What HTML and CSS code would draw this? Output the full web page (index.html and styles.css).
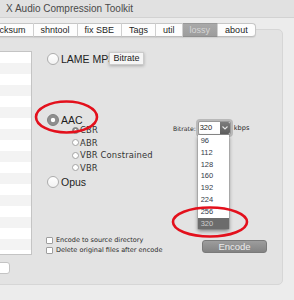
FILE: index.html
```html
<!DOCTYPE html>
<html lang="en">
<head>
    <meta charset="UTF-8">
    <meta name="viewport" content="width=device-width, initial-scale=1.0">
    <title>X Audio Compression Toolkit</title>
    <link rel="stylesheet" href="styles.css">
</head>
<body>
    <div class="titlebar">
        <span class="title">X Audio Compression Toolkit</span>
    </div>

    <div class="window">
        <div class="tabs">
            <span class="tab first">checksum</span>
            <span class="tab">shntool</span>
            <span class="tab">fix SBE</span>
            <span class="tab">Tags</span>
            <span class="tab">util</span>
            <span class="tab active">lossy</span>
            <span class="tab last">about</span>
        </div>

        <div class="panel">
            <div class="files">
                <div class="file-list"></div>
                <div class="file-field"></div>
            </div>

            <div class="options">
                <div class="radio-row lame">
                    <span class="radio"></span>
                    <span class="radio-label">LAME MP3</span>
                    <span class="tooltip">Bitrate</span>
                </div>

                <div class="aac-block">
                    <div class="aac-opts">
                        <div class="radio-row">
                            <span class="radio on"></span>
                            <span class="radio-label">AAC</span>
                        </div>
                        <div class="sub-radios">
                            <div class="sub-row"><span class="mini-radio on"></span>CBR</div>
                            <div class="sub-row"><span class="mini-radio"></span>ABR</div>
                            <div class="sub-row"><span class="mini-radio"></span>VBR Constrained</div>
                            <div class="sub-row"><span class="mini-radio"></span>VBR</div>
                        </div>
                    </div>

                    <div class="bitrate">
                        <span class="small-label">Bitrate:</span>
                        <div class="select">
                            <div class="select-inner">
                                <span class="select-value">320</span>
                                <span class="select-arrow">
                                    <svg width="6" height="4" viewBox="0 0 6 4"><path d="M0.5 0.5 L3 3 L5.5 0.5" fill="none" stroke="#e6e6e6" stroke-width="1.1"/></svg>
                                </span>
                            </div>
                            <ul class="dropdown">
                                <li>96</li>
                                <li>112</li>
                                <li>128</li>
                                <li>160</li>
                                <li>192</li>
                                <li>224</li>
                                <li>256</li>
                                <li class="selected">320</li>
                            </ul>
                        </div>
                        <span class="small-label kbps">kbps</span>
                    </div>
                </div>

                <div class="radio-row opus">
                    <span class="radio"></span>
                    <span class="radio-label">Opus</span>
                </div>

                <div class="bottom-row">
                    <div class="checks">
                        <div class="check"><span class="box"></span>Encode to source directory</div>
                        <div class="check"><span class="box"></span>Delete original files after encode</div>
                    </div>
                    <button class="encode">Encode</button>
                </div>
            </div>
        </div>
    </div>

    <!-- red circles drawn over the screenshot -->
    <svg class="marks" width="294" height="300" viewBox="0 0 294 300">
        <ellipse cx="66.5" cy="117" rx="30.5" ry="15.5" fill="none" stroke="#e3101c" stroke-width="2.6"/>
        <ellipse cx="210" cy="222" rx="37" ry="14.5" fill="none" stroke="#e3101c" stroke-width="2.6"/>
    </svg>
</body>
</html>
```

FILE: styles.css
```css
body {
    margin: 0;
    padding: 0;
    width: 294px;
    height: 300px;
    overflow: hidden;
    position: relative;
    background-color: #ececec;
    font-family: "Liberation Sans", Arial, sans-serif;
    color: #1e1e1e;
}

.titlebar {
    height: 17px;
    background-color: #e1e1e1;
    border-bottom: 1px solid #d2d2d2;
    display: flex;
    align-items: center;
    padding-left: 6px;
}
.title {
    font-size: 10px;
    color: #4a4a4a;
}

.window {
    padding-top: 5px;
}

.tabs {
    position: relative;
    z-index: 1;
    display: flex;
    margin-left: -23px;
    height: 14px;
}
.tab {
    box-sizing: border-box;
    height: 14px;
    padding: 0 7px;
    font-size: 9px;
    line-height: 12px;
    background-color: #fdfdfd;
    border-top: 1px solid #c6c6c6;
    border-bottom: 1px solid #bdbdbd;
    border-right: 1px solid #d2d2d2;
    box-shadow: 0 1px 1px rgba(0, 0, 0, 0.08);
}
.tab.first {
    border-left: 1px solid #c6c6c6;
    border-radius: 4px 0 0 4px;
}
.tab.last {
    border-right: 1px solid #c6c6c6;
    border-radius: 0 4px 4px 0;
}
.tab.active {
    background: linear-gradient(#a9a9a9, #9d9d9d);
    color: #d6d6d6;
    border-top-color: #999;
    border-bottom-color: #8f8f8f;
}

.panel {
    box-sizing: border-box;
    display: flex;
    height: 256px;
    margin: -8px 11px 0 -30px;
    background-color: #e3e3e3;
    border: 1px solid #d6d6d6;
    border-radius: 5px;
}

.files {
    width: 61px;
    padding-top: 21px;
}
.file-list {
    box-sizing: border-box;
    height: 204px;
    border: 1px solid #c4c4c4;
    background: repeating-linear-gradient(#ffffff 0, #ffffff 11px, #f3f3f3 11px, #f3f3f3 22px);
}
.file-field {
    box-sizing: border-box;
    width: 39px;
    height: 12px;
    margin-top: 7px;
    background-color: #fff;
    border: 1px solid #c4c4c4;
    border-radius: 3px;
}

.options {
    flex: 1;
    padding-left: 15px;
    padding-top: 23px;
}

.radio-row {
    display: flex;
    align-items: center;
    height: 12px;
    font-size: 10.5px;
}
.radio-row.lame {
    position: relative;
}
.radio {
    box-sizing: border-box;
    width: 12px;
    height: 12px;
    border-radius: 50%;
    border: 1px solid #adadad;
    background: linear-gradient(#ffffff, #f2f2f2);
}
.radio.on {
    border-color: #7e7e7e;
    background: radial-gradient(circle, #ffffff 0, #ffffff 1.8px, #8c8c8c 2.6px, #959595 100%);
}
.radio-label {
    margin-left: 2px;
}

.tooltip {
    position: absolute;
    left: 62px;
    top: -1px;
    box-sizing: border-box;
    width: 35px;
    height: 13px;
    background-color: #f5f5f5;
    border: 1px solid #cbcbcb;
    box-shadow: 0 1px 3px rgba(0, 0, 0, 0.25);
    font-size: 9px;
    line-height: 11px;
    text-align: center;
    color: #222;
}

.aac-block {
    display: flex;
    align-items: flex-start;
    margin-top: 49px;
}
.aac-opts {
    width: 126px;
}
.sub-radios {
    margin-top: -2px;
}
.sub-row {
    display: flex;
    align-items: center;
    height: 12.5px;
    padding-left: 25px;
    font-family: "DejaVu Sans", sans-serif;
    font-size: 8.4px;
    letter-spacing: 0.15px;
    color: #333;
}
.mini-radio {
    box-sizing: border-box;
    width: 7px;
    height: 7px;
    margin-right: 1px;
    border-radius: 50%;
    border: 1px solid #a3a3a3;
    background-color: #fff;
}
.mini-radio.on {
    border-color: #7e7e7e;
    background: radial-gradient(circle, #ffffff 0, #ffffff 1px, #8c8c8c 1.6px);
}

.bitrate {
    display: flex;
    align-items: center;
    margin-top: 5px;
}
.small-label {
    flex: none;
    font-family: "DejaVu Sans", sans-serif;
    font-size: 6.1px;
    color: #2a2a2a;
}
.small-label.kbps {
    margin-left: 1px;
    font-size: 6.6px;
}
.select {
    position: relative;
    flex: none;
    box-sizing: border-box;
    width: 37px;
    height: 18px;
    margin-left: 0;
    padding: 2px;
    border-radius: 4px;
    background-color: #b9b9b9;
}
.select-inner {
    box-sizing: border-box;
    display: flex;
    height: 14px;
    background-color: #fff;
    border: 1px solid #9a9a9a;
    border-radius: 2px;
}
.select-value {
    flex: 1;
    padding-left: 1px;
    font-size: 7.5px;
    line-height: 12px;
    color: #222;
}
.select-arrow {
    width: 10px;
    display: flex;
    align-items: center;
    justify-content: center;
    background: linear-gradient(#7c7c7c, #5e5e5e);
    border-radius: 0 2px 2px 0;
}

.dropdown {
    position: absolute;
    top: 16px;
    left: 2px;
    width: 31px;
    margin: 0;
    padding: 0;
    list-style: none;
    background-color: #fff;
    box-shadow: 0 2px 4px rgba(0, 0, 0, 0.45), 0 0 1px rgba(0, 0, 0, 0.5);
}
.dropdown li {
    height: 11.8px;
    line-height: 11.8px;
    padding-left: 3px;
    font-size: 7.5px;
    color: #333a48;
}
.dropdown li.selected {
    background-color: #6c6c6c;
    color: #cfcfcf;
}

.radio-row.opus {
    margin-top: 2px;
}

.bottom-row {
    display: flex;
    align-items: flex-start;
    margin-top: 47px;
}
.checks {
    width: 156px;
    margin-left: -1px;
    flex: none;
}
.check {
    display: flex;
    align-items: center;
    height: 10px;
    font-family: "DejaVu Sans", sans-serif;
    font-size: 6.5px;
    white-space: nowrap;
    color: #2a2a2a;
}
.box {
    box-sizing: border-box;
    width: 7px;
    height: 7px;
    margin-right: 3px;
    border: 1px solid #9f9f9f;
    border-radius: 1px;
    background-color: #fff;
}

.encode {
    box-sizing: border-box;
    width: 65px;
    height: 13px;
    margin: 5px 0 0 0;
    padding: 0;
    font-family: "Liberation Sans", Arial, sans-serif;
    font-size: 9.5px;
    color: #ececec;
    background: linear-gradient(#9d9d9d, #838383);
    border: 1px solid #7a7a7a;
    border-radius: 3px;
}

.marks {
    position: absolute;
    top: 0;
    left: 0;
    pointer-events: none;
}
```
